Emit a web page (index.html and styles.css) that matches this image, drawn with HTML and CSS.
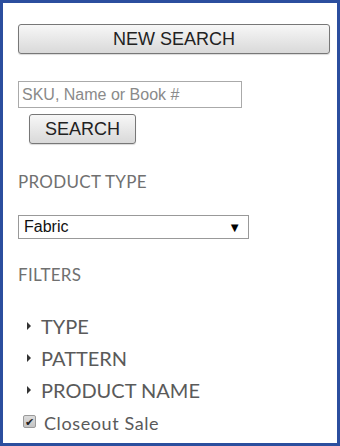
FILE: index.html
```html
<!DOCTYPE html>
<html>
<head>
<meta charset="utf-8">
<link rel="stylesheet" href="styles.css">
</head>
<body>
<div class="frame">
  <button class="btn btn-wide">NEW SEARCH</button>
  <div class="search">
    <input class="field" type="text" placeholder="SKU, Name or Book #">
    <button class="btn btn-small">SEARCH</button>
  </div>
  <div class="label label-type">PRODUCT TYPE</div>
  <div class="select">
    <span>Fabric</span>
    <span class="arrow">&#9660;</span>
  </div>
  <div class="label label-filters">FILTERS</div>
  <ul class="filters">
    <li><span class="tri"></span>TYPE</li>
    <li><span class="tri"></span>PATTERN</li>
    <li><span class="tri"></span>PRODUCT NAME</li>
  </ul>
  <label class="check"><span class="box">&#10004;</span>Closeout Sale</label>
</div>
</body>
</html>
```
FILE: styles.css
```css
html, body { margin: 0; padding: 0; background: #fff; }
.frame {
  box-sizing: border-box;
  width: 340px;
  height: 446px;
  border: 3px solid #2b4e9e;
  padding: 21px 7px 0 15px;
  display: flex;
  flex-direction: column;
  align-items: flex-start;
}
.btn {
  font-family: "Liberation Sans", Arial, sans-serif;
  color: #222;
  background: linear-gradient(#f7f7f7, #d9d9d9);
  border: 1px solid #777;
  border-radius: 3px;
  box-shadow: 0 1px 1px rgba(0,0,0,0.15);
  padding: 0;
  cursor: pointer;
}
.btn-wide {
  width: 312px;
  height: 30px;
  font-size: 18px;
}
.search {
  margin-top: 27px;
  display: flex;
  flex-direction: column;
  align-items: flex-start;
}
.field {
  box-sizing: border-box;
  width: 224px;
  height: 27px;
  border: 1px solid #aaa;
  padding: 0 3px;
  font-family: "Liberation Sans", Arial, sans-serif;
  font-size: 16px;
  margin: 0;
}
.field::placeholder { color: #8a8a8a; }
.btn-small {
  margin: 6px 0 0 11px;
  width: 107px;
  height: 30px;
  font-size: 18px;
}
.label {
  font-family: "Lato", sans-serif;
  color: #707070;
  font-size: 17px;
  letter-spacing: 0.3px;
}
.label-type { margin-top: 27px; }
.select {
  margin-top: 23px;
  box-sizing: border-box;
  width: 231px;
  height: 24px;
  border: 1px solid #999;
  display: flex;
  align-items: center;
  justify-content: space-between;
  padding: 0 7px 0 5px;
  font-family: "Liberation Sans", Arial, sans-serif;
  font-size: 16px;
  color: #111;
}
.arrow { font-size: 13px; color: #000; }
.label-filters { margin-top: 25px; }
.filters {
  list-style: none;
  margin: 25px 0 0 0;
  padding: 0 0 0 9px;
  font-family: "Lato", sans-serif;
  font-size: 20px;
  color: #5a5a5a;
}
.filters li {
  display: flex;
  align-items: center;
  height: 32px;
}
.tri {
  width: 0; height: 0;
  border-top: 4px solid transparent;
  border-bottom: 4px solid transparent;
  border-left: 4px solid #333;
  margin-right: 10px;
}
.check {
  margin: 6px 0 0 5px;
  font-family: "Lato", sans-serif;
  font-size: 18px;
  letter-spacing: 0.6px;
  color: #5a5a5a;
  display: flex;
  align-items: center;
}
.box {
  box-sizing: border-box;
  width: 13px;
  height: 13px;
  border: 1px solid #9a9a9a;
  border-radius: 2px;
  background: linear-gradient(#dcdcdc, #c4c4c4);
  color: #222;
  font-size: 11px;
  line-height: 11px;
  text-align: center;
  letter-spacing: 0;
  margin-right: 8px;
  margin-top: -4px;
}
```
